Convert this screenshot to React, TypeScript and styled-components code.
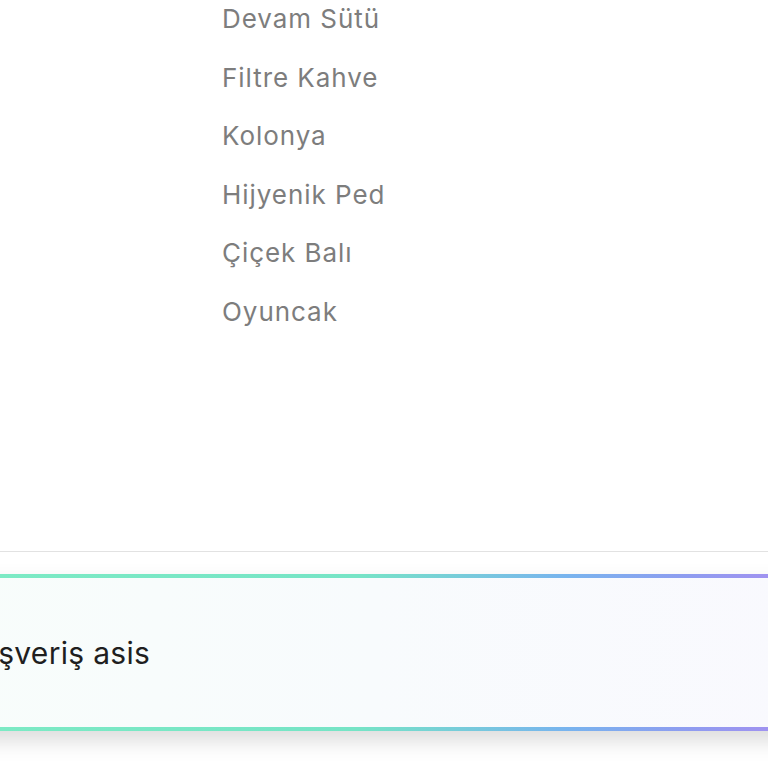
import styled, { createGlobalStyle } from "styled-components";

const items = ["Devam Sütü", "Filtre Kahve", "Kolonya", "Hijyenik Ped", "Çiçek Balı", "Oyuncak"];

export default function App() {
	return (
		<>
			<GlobalStyle />
			<Page>
				<List>
					{items.map((item) => (
						<Item key={item}>{item}</Item>
					))}
				</List>
				<Divider />
				<Composer>
					<Typed>Alışveriş asis</Typed>
				</Composer>
			</Page>
		</>
	);
}

const GlobalStyle = createGlobalStyle`
	html, body {
		margin: 0;
		padding: 0;
		background: #ffffff;
	}
	body {
		font-family: Inter, "Noto Sans", sans-serif;
	}
`;

const Page = styled.div`
	width: 768px;
	height: 768px;
	overflow: hidden;
	display: flex;
	flex-direction: column;
	background: #ffffff;
`;

const List = styled.ul`
	list-style: none;
	margin: -10px 0 0;
	padding: 0 0 0 222px;
	display: flex;
	flex-direction: column;
	height: 561px;
	box-sizing: border-box;
`;

const Item = styled.li`
	font-size: 26px;
	line-height: 58.6px;
	color: #7d7d7d;
	letter-spacing: 0.95px;
`;

const Divider = styled.div`
	height: 1px;
	background: #e2e2e2;
	flex-shrink: 0;
`;

const Composer = styled.div`
	margin: 22px -40px 0 -60px;
	height: 157px;
	flex-shrink: 0;
	box-sizing: border-box;
	border: 4px solid transparent;
	border-left-width: 0;
	border-right-width: 0;
	background:
		linear-gradient(90deg, #f8fdfb 0%, #f8fbfd 50%, #f9f9fe 100%) padding-box,
		linear-gradient(90deg, #7debc4 0%, #76e4c6 48%, #78b4ee 72%, #8e9cf0 86%, #a88ef0 100%) border-box;
	box-shadow: 0 10px 20px rgba(0, 0, 0, 0.14);
	display: flex;
	align-items: center;
	padding-left: 22px;
`;

const Typed = styled.span`
	font-size: 30px;
	color: #1f1f1f;
	white-space: nowrap;
	letter-spacing: 0.3px;
`;
